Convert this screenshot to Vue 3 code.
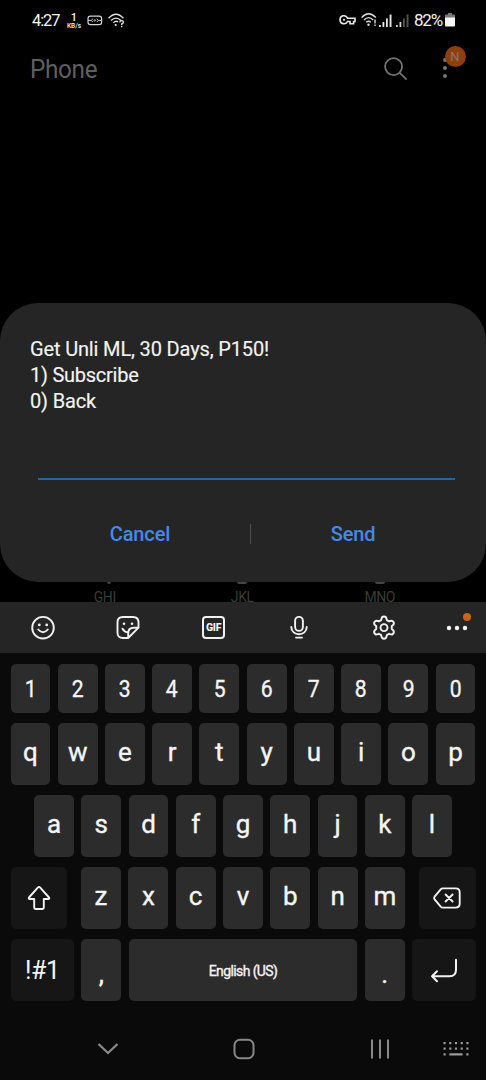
<script setup>
const digits = '1234567890'.split('')
const rowQ = 'qwertyuiop'.split('')
const rowA = 'asdfghjkl'.split('')
const rowZ = 'zxcvbnm'.split('')
const dots = [0, 1, 2, 3, 4]
</script>

<template>
  <div class="screen">
    <header class="status">
      <div class="status-left">
        <span class="clock">4:27</span>
        <span class="speed"><b>1</b><i>KB/s</i></span>
        <svg class="card" width="16" height="11" viewBox="0 0 16 11" fill="none" stroke="#d5d5d5">
          <rect x="1" y="1.2" width="13.6" height="8.4" rx="2.4" stroke-width="1.2" />
          <path d="M1 5.4h3.2M11.4 5.4h3.2" stroke-width="1" />
          <path d="M5.8 3.6 4.4 5.4l1.4 1.8M9.8 3.6l1.4 1.8-1.4 1.8" stroke-width=".9" />
          <circle cx="7.8" cy="5.4" r=".8" stroke-width=".8" />
        </svg>
        <svg class="wifi-q" width="18" height="15" viewBox="0 0 18 15" fill="none" stroke="#e2e2e2" stroke-width="1.4">
          <path d="M.6 5.2q7.400-8 14.800 0M3 7.600q5-5 10 0M5.400 9.800q2.500-2.600 4.600-.8" />
          <circle cx="7.700" cy="12" r="1.100" fill="#e2e2e2" stroke="none" />
          <path d="M11.800 9.400q.2-1.900 1.900-1.800 1.800.2 1.600 1.700-.2 1-1.600 1.700v.9M13.700 12.800v1.400" />
        </svg>
      </div>
      <div class="status-right">
        <svg width="17" height="12" viewBox="0 0 17 12" fill="none" stroke="#e8e8e8" stroke-width="1.6">
          <path d="M8.5 4.3C6.800.2 1 1.200 1 5.700s5.800 5.400 7.500 1.800H11v2.300h3.600V7.500H16V4.300z" />
          <circle cx="5" cy="5.800" r="1.100" fill="#e8e8e8" stroke="none" />
        </svg>
        <svg class="wifi" width="16" height="14" viewBox="0 0 16 14" fill="none" stroke="#dedede" stroke-width="1.4">
          <path d="M.6 4.600q7-7.600 14.200 0M3 7q4.700-4.800 9.200 0M5.300 9.300q2.200-2.200 4.400 0" />
          <circle cx="7.500" cy="11.700" r="1.200" fill="#dedede" stroke="none" />
          <path d="M14 6.500v4M14 11.500v1.600" />
        </svg>
        <svg class="signal" width="13" height="13" viewBox="0 0 13 13" fill="#e6e6e6">
          <path d="M0 11h1.800v2H0zM3.500 8h1.800v5H3.500zM7 4.500h1.800V13H7zM10.600.5h1.900V13h-1.900z" />
        </svg>
        <svg class="signal two" width="13" height="13" viewBox="0 0 13 13" fill="#d0d0d0">
          <path d="M0 11h1.800v2H0zM3.500 8h1.800v5H3.500z" />
          <path d="M7 4.500h1.800V13H7zM10.600.5h1.900V13h-1.900z" fill="#555" />
        </svg>
        <span class="percent">82%</span>
        <svg class="battery" width="10" height="14" viewBox="0 0 10 14">
          <path d="M3 0h4v1.500h2q1 0 1 1V5H0V2.500q0-1 1-1h2z" fill="#777" />
          <path d="M0 4.500h10v8q0 1-1 1H1q-1 0-1-1z" fill="#f5f5f5" />
        </svg>
      </div>
    </header>

    <div class="appbar">
      <h1>Phone</h1>
      <svg class="search" width="26" height="26" viewBox="0 0 26 26" fill="none" stroke="#737373" stroke-width="1.8">
        <circle cx="10.600" cy="10.600" r="8.500" />
        <path d="m16.800 16.800 6.800 6.800" />
      </svg>
      <div class="more">
        <svg width="6" height="22" viewBox="0 0 6 22" fill="#777">
          <circle cx="3" cy="3" r="2" /><circle cx="3" cy="11" r="2" /><circle cx="3" cy="19" r="2" />
        </svg>
        <span class="badge">N</span>
      </div>
    </div>

    <main class="dialog">
      <p class="message"><span>Get Unli ML, 30 Days, P150!</span><span class="tight">1) Subscribe</span><span>0) Back</span></p>
      <div class="field"></div>
      <div class="actions">
        <button class="cancel">Cancel</button>
        <span class="sep"></span>
        <button class="send">Send</button>
      </div>
    </main>

    <div class="dialpad">
      <div><i class="mark small"></i><span>GHI</span></div>
      <div><i class="mark"></i><span>JKL</span></div>
      <div><i class="mark"></i><span>MNO</span></div>
    </div>

    <section class="toolbar">
      <svg width="26" height="26" viewBox="0 0 26 26" fill="none" stroke="#f1f1f1" stroke-width="1.9" stroke-linecap="round">
        <circle cx="13" cy="12.700" r="10.800" />
        <path d="M8.200 14.500q4.800 5.600 9.600 0" />
        <circle cx="9.300" cy="9.900" r="1.400" fill="#f1f1f1" stroke="none" /><circle cx="16.700" cy="9.900" r="1.400" fill="#f1f1f1" stroke="none" />
      </svg>
      <svg width="26" height="26" viewBox="0 0 26 26" fill="none" stroke="#f1f1f1" stroke-width="1.9" stroke-linecap="round" stroke-linejoin="round">
        <path d="M13.200 23H8q-5.500 0-5.500-5.500v-10Q2.500 2 8 2h10q5.500 0 5.500 5.500v5.200L13.200 23v-4.800q0-5.500 5.500-5.500h4.800" />
        <path d="M7.500 13.700q2 3.600 5.800 3.500" />
        <circle cx="9" cy="8.800" r="1.300" fill="#f1f1f1" stroke="none" /><circle cx="17" cy="8.800" r="1.300" fill="#f1f1f1" stroke="none" />
      </svg>
      <div class="gif">GIF</div>
      <svg width="26" height="26" viewBox="0 0 26 26" fill="none" stroke="#f1f1f1" stroke-width="1.9" stroke-linecap="round">
        <rect x="9.100" y="1.900" width="7.800" height="14" rx="3.900" />
        <path d="M5.300 11.900c0 9.700 15.400 9.700 15.400 0M10 22.600h6" />
      </svg>
      <svg width="26" height="26" viewBox="0 0 26 26" fill="none" stroke="#f1f1f1" stroke-width="1.9" stroke-linejoin="round">
        <path d="M10.400 4.100q.3-2.600 2.600-2.600t2.600 2.600l.2 1 2.200 1.300 1-.4q2.400-1 3.500 1t-.9 3.500l-.8.6v3l.8.6q2 1.500.9 3.500t-3.500 1l-1-.4-2.200 1.300-.2 1q-.3 2.600-2.600 2.600t-2.600-2.600l-.2-1L8 18.800l-1 .4q-2.400 1-3.500-1t.9-3.500l.8-.6v-3l-.8-.6Q2.400 9 3.500 7t3.500-1l1 .4 2.200-1.300z" />
        <circle cx="13" cy="12.600" r="3.500" />
      </svg>
      <div class="overflow">
        <svg width="22" height="6" viewBox="0 0 22 6" fill="#f4f4f4">
          <circle cx="3" cy="3" r="2.200" /><circle cx="11" cy="3" r="2.200" /><circle cx="19" cy="3" r="2.200" />
        </svg>
        <span class="dot"></span>
      </div>
    </section>

    <section class="keyboard">
      <div class="row numbers"><div v-for="k in digits" :key="k" class="key"><span>{{ k }}</span></div></div>
      <div class="row"><div v-for="k in rowQ" :key="k" class="key">{{ k }}</div></div>
      <div class="row inset"><div v-for="k in rowA" :key="k" class="key">{{ k }}</div></div>
      <div class="row shift-row">
        <div class="key fn side">
          <svg width="24" height="26" viewBox="0 0 24 26" fill="none" stroke="#f2f2f2" stroke-width="1.900" stroke-linejoin="round">
            <path d="M11 2.400q1-1 2 0l9 10.100q.9 1.400-.8 1.500h-4.400v8.200q0 1.800-1.800 1.800H9q-1.800 0-1.800-1.800V14H2.800q-1.700-.1-.8-1.500z" />
          </svg>
        </div>
        <div class="letters"><div v-for="k in rowZ" :key="k" class="key">{{ k }}</div></div>
        <div class="key fn side">
          <svg width="28" height="22" viewBox="0 0 28 22" fill="none" stroke="#f2f2f2" stroke-width="1.900" stroke-linejoin="round" stroke-linecap="round">
            <path d="M9.700 1.400h13q4 0 4 4v11.200q0 4-4 4h-13q-1.200 0-2-.9L1.600 12.300q-.9-1.300 0-2.600L7.700 2.300q.8-.9 2-.9z" />
            <path d="m12.600 7.500 7 7m0-7-7 7" />
          </svg>
        </div>
      </div>
      <div class="row bottom">
        <div class="key fn wide"><span class="sym">!#1</span></div>
        <div class="key punct">,</div>
        <div class="key space">English (US)</div>
        <div class="key punct">.</div>
        <div class="key fn wide">
          <svg width="28" height="25" viewBox="0 0 28 25" fill="none" stroke="#f2f2f2" stroke-width="2" stroke-linejoin="round" stroke-linecap="round">
            <path d="M26 1.800v10q0 6.500-6.500 6.500H2M7 13.300l-5 5 5 5" />
          </svg>
        </div>
      </div>
    </section>

    <nav class="navbar">
      <svg class="down" width="22" height="14" viewBox="0 0 22 14" fill="none" stroke="#888" stroke-width="2.300"><path d="m1.500 2 9.500 9 9.500-9" /></svg>
      <svg class="home" width="22" height="22" viewBox="0 0 22 22" fill="none" stroke="#888" stroke-width="2"><rect x="1.500" y="1.800" width="19" height="18.400" rx="5.500" /></svg>
      <svg class="recents" width="20" height="20" viewBox="0 0 20 20" stroke="#888" stroke-width="2"><path d="M2 .5v19M10 .5v19M18 .5v19" /></svg>
      <svg class="hide" width="26" height="16" viewBox="0 0 26 16" fill="#999">
        <g v-for="d in dots" :key="d">
          <rect :x="0.5 + d * 5.7" y="1" width="2.200" height="2.200" />
          <rect :x="0.5 + d * 5.7" y="6.500" width="2.200" height="2.200" />
        </g>
        <path d="M.5 12.300h2.200v2.200H.5zM6.300 12.300h13.300v2.200H6.300zM23.300 12.300h2.200v2.200h-2.200z" />
      </svg>
    </nav>
  </div>
</template>

<style>
body { background: #000; }
</style>

<style scoped>
* { box-sizing: border-box; }
.screen { width: 486px; height: 1080px; overflow: hidden; background: #000; color: #f5f5f5; font-family: Roboto, "Noto Sans", sans-serif; display: flex; flex-direction: column; }
svg { display: block; flex: none; }
.status { height: 40px; flex: none; display: flex; justify-content: space-between; padding: 0 31px 0 32px; }
.status-left, .status-right { display: flex; align-items: center; height: 40px; }
.clock { font-size: 16.5px; letter-spacing: -1.1px; width: 28px; margin-right: 6px; white-space: nowrap; }
.speed { width: 16px; display: flex; flex-direction: column; align-items: center; line-height: 9px; }
.speed b { font-size: 11px; font-weight: 500; line-height: 11px; }
.speed i { font-style: normal; font-size: 6.5px; line-height: 6px; font-weight: 500; }
.card { margin-left: 5px; }
.wifi-q { margin-left: 5px; }
.wifi { margin-left: 5px; }
.signal { margin-left: 2.5px; }
.signal.two { margin-left: 4px; }
.percent { font-size: 17px; letter-spacing: -1.2px; width: 27px; margin-left: 5px; white-space: nowrap; }
.battery { margin-left: 4px; }
.appbar { height: 263px; flex: none; display: flex; align-items: flex-start; padding-left: 30px; }
h1 { margin: 12px 0 0; font-size: 26px; line-height: 34px; font-weight: 400; letter-spacing: -.35px; color: #5f5f5f; width: 353px; transform: scaleX(.935); transform-origin: left; }
.search { margin-top: 16px; }
.more { position: relative; width: 6px; height: 22px; margin: 17px 0 0 32.5px; }
.badge { position: absolute; left: 3px; top: -11px; width: 21px; height: 21px; border-radius: 50%; background: #8c3f10; color: #8b7768; font-size: 13px; line-height: 21px; text-align: center; }
.dialog { height: 279px; flex: none; background: #252525; border-radius: 38px; padding: 32.5px 31px 0 30px; }
.message { margin: 0; font-size: 20px; line-height: 26.3px; height: 79px; color: #f3f3f3; -webkit-text-stroke: .15px #f3f3f3; }
.message span { display: block; white-space: nowrap; letter-spacing: -.15px; }
.message .tight { letter-spacing: -.25px; }
.field { height: 2px; margin: 63.5px 0 0 8px; background: #1e66ad; }
.actions { display: flex; align-items: center; height: 50px; margin-top: 29px; }
button { border: 0; padding: 0; background: none; color: #4689ea; font: 500 20px/26px Roboto, sans-serif; letter-spacing: -.15px; }
.cancel { width: 220px; }
.sep { width: 1px; height: 20px; background: #505050; }
.send { flex: 1; }
.dialpad { height: 20px; flex: none; display: flex; padding-left: 36px; }
.dialpad div { width: 137.5px; height: 20px; display: flex; flex-direction: column; align-items: center; color: #3b3b3b; font-size: 14px; line-height: 16px; letter-spacing: -.4px; }
.mark { width: 10px; height: 2px; border-radius: 0 0 5px 5px; background: #454545; flex: none; margin-bottom: 5px; }
.mark.small { width: 4px; margin-left: 8px; }
.toolbar { height: 51px; flex: none; background: #252525; display: flex; align-items: center; padding-left: 30px; gap: 59.3px; }
.gif { width: 23px; height: 23px; margin: 0 1.5px; border: 2px solid #f1f1f1; border-radius: 4px; font-size: 10.5px; font-weight: 800; line-height: 19px; letter-spacing: -.2px; text-align: center; flex: none; }
.overflow { position: relative; margin-left: -10px; }
.dot { position: absolute; left: 17px; top: -12px; width: 8px; height: 8px; border-radius: 50%; background: #c96418; }
.keyboard { height: 357px; flex: none; background: #0a0a0a; padding: 10.5px 10.5px 0; display: flex; flex-direction: column; gap: 10px; }
.row { display: flex; gap: 7.4px; height: 62px; flex: none; }
.numbers { height: 49.5px; }
.inset { padding: 0 23.6px; }
.key { flex: 1; background: #2c2c2c; border-radius: 5px; display: flex; align-items: center; justify-content: center; font-size: 26px; font-weight: 400; -webkit-text-stroke: .35px #f5f5f5; padding-bottom: 4px; }
.numbers .key { font-size: 24px; padding: 2px 0 0; }
.numbers span { transform: scaleX(.88); }
.letters { width: 324px; flex: none; display: flex; gap: 7.3px; }
.shift-row { gap: 14px; }
.fn { background: #161616; padding: 0; }
.bottom .wide { flex: none; width: 63.5px; }
.bottom .punct { flex: none; width: 40px; padding: 7px 0 0; }
.bottom .space { font-size: 14px; padding: 1px 0 0; letter-spacing: -.6px; }
.sym { font-size: 25px; letter-spacing: -.5px; -webkit-text-stroke: 0; }
.navbar { flex: 1; background: #0a0a0a; display: flex; align-items: center; padding: 8px 0 0 97px; }
.home { margin-left: 113.5px; }
.recents { margin-left: 115.5px; }
.hide { margin-left: 53px; }
</style>
